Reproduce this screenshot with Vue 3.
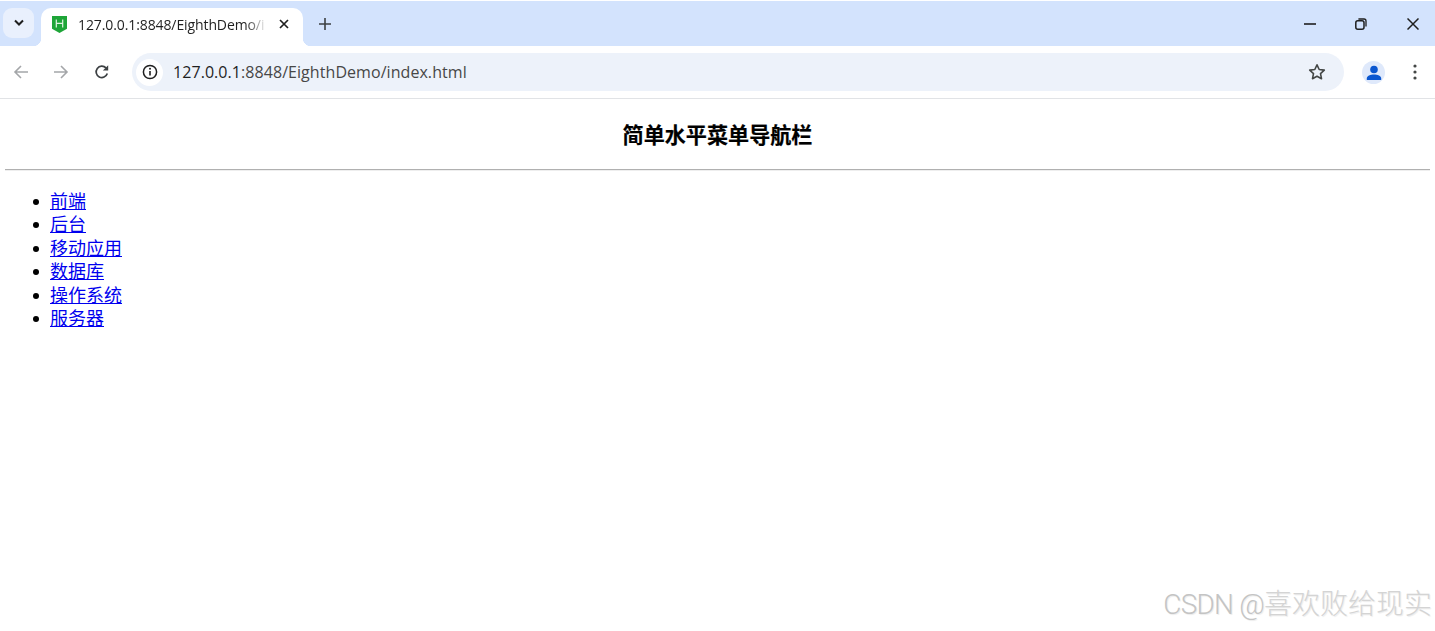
<script setup>
const items = ['前端', '后台', '移动应用', '数据库', '操作系统', '服务器']
</script>

<template>
  <div class="page">
    <header class="chrome">
      <div class="strip">
        <button class="tab-search">
          <svg width="12" height="8" viewBox="0 0 12 8"><path d="M2 1.5 6 5.5 10 1.5" fill="none" stroke="#1f1f1f" stroke-width="2"/></svg>
        </button>
        <div class="tab">
          <svg class="favicon" width="15" height="17" viewBox="0 0 15 17">
            <path d="M0 0h15v12.800L7.500 17 0 12.800z" fill="#1ea538"/>
            <path d="M4.300 3.500v8M10.700 3.500v8M4.300 7.400h6.400" fill="none" stroke="#dff3e2" stroke-width="1.200"/>
          </svg>
          <span class="tab-title">127.0.0.1:8848/EighthDemo/i</span>
          <svg class="tab-close" width="10" height="10" viewBox="0 0 10 10"><path d="M1 1 9 9M9 1 1 9" stroke="#1f1f1f" stroke-width="1.700"/></svg>
        </div>
        <svg class="new-tab" width="14" height="14" viewBox="0 0 14 14"><path d="M7 1v12M1 7h12" stroke="#3c4043" stroke-width="1.600"/></svg>
        <div class="win-controls">
          <svg width="12" height="12" viewBox="0 0 12 12"><path d="M0 6h12" stroke="#1f1f1f" stroke-width="1.600"/></svg>
          <svg width="12" height="12" viewBox="0 0 12 12"><rect x="0.800" y="2.800" width="8.200" height="8.400" rx="2" fill="none" stroke="#1f1f1f" stroke-width="1.500"/><path d="M3.400 1H9a2 2 0 0 1 2 2v5.600" fill="none" stroke="#1f1f1f" stroke-width="1.300"/></svg>
          <svg width="12" height="12" viewBox="0 0 12 12"><path d="M.5.5l11 11M11.500.5l-11 11" stroke="#1f1f1f" stroke-width="1.500"/></svg>
        </div>
      </div>
      <div class="toolbar">
        <div class="nav">
          <svg width="16" height="16" viewBox="0 0 16 16"><path d="M15 8H2M8 2 2 8l6 6" fill="none" stroke="#a4a6a9" stroke-width="1.600"/></svg>
          <svg width="16" height="16" viewBox="0 0 16 16"><path d="M1 8h13M8 2l6 6-6 6" fill="none" stroke="#a4a6a9" stroke-width="1.600"/></svg>
          <svg width="16" height="16" viewBox="0 0 16 16"><path d="M13.300 9.500A5.700 5.700 0 1 1 12 3.900" fill="none" stroke="#3c4043" stroke-width="1.700"/><path d="M14.200 1.200v5.300H8.900z" fill="#3c4043"/></svg>
        </div>
        <div class="omnibox">
          <span class="info-chip">
            <svg width="16" height="16" viewBox="0 0 16 16"><circle cx="8" cy="8" r="6.600" fill="none" stroke="#1f1f1f" stroke-width="1.500"/><path d="M8 7v4.500" stroke="#1f1f1f" stroke-width="1.600"/><circle cx="8" cy="4.800" r="1" fill="#1f1f1f"/></svg>
          </span>
          <span class="url"><span class="host">127.0.0.1</span>:8848/EighthDemo/index.html</span>
          <svg class="star" width="18" height="18" viewBox="0 0 18 18"><path d="M9 1.800l2.200 4.700 5.100.6-3.800 3.500 1 5.100L9 13.200l-4.500 2.500 1-5.100L1.700 7.100l5.100-.6z" fill="none" stroke="#444746" stroke-width="1.600" stroke-linejoin="round"/></svg>
        </div>
        <span class="avatar">
          <svg width="16" height="16" viewBox="0 0 16 16"><circle cx="8" cy="4.500" r="3.800" fill="#0b57d0"/><path d="M.8 15v-1.500C.8 11 4.500 9.600 8 9.600s7.200 1.400 7.200 3.900V15z" fill="#0b57d0"/></svg>
        </span>
        <svg class="menu" width="4" height="16" viewBox="0 0 4 16"><circle cx="2" cy="2" r="1.600" fill="#444746"/><circle cx="2" cy="8" r="1.600" fill="#444746"/><circle cx="2" cy="14" r="1.600" fill="#444746"/></svg>
      </div>
    </header>

    <main class="content">
      <h3 class="title">简单水平菜单导航栏</h3>
      <hr class="rule" />
      <ul class="list">
        <li v-for="item in items" :key="item"><a href="#">{{ item }}</a></li>
      </ul>
    </main>

    <div class="watermark"><span class="wm-latin">CSDN @</span>喜欢败给现实</div>
  </div>
</template>

<style>
html, body { margin: 0; background: #fff; overflow: hidden; }
</style>

<style scoped>
.page {
  position: relative;
  width: 1435px;
  height: 631px;
  overflow: hidden;
  background: #fff;
  font-family: "Liberation Sans", "Noto Sans CJK SC", sans-serif;
}
.chrome { display: flex; flex-direction: column; }
.strip {
  height: 45px;
  margin-top: 1px;
  background: #d3e3fd;
  display: flex;
  align-items: flex-start;
  box-sizing: border-box;
  padding: 7px 0 0 3px;
}
.tab-search {
  width: 31px;
  height: 30px;
  border: 0;
  padding: 0;
  border-radius: 9px;
  background: #e9f0fd;
  display: flex;
  align-items: center;
  justify-content: center;
}
.tab {
  position: relative;
  width: 262px;
  height: 38px;
  margin-left: 7px;
  background: #fff;
  border-radius: 10px 10px 0 0;
  display: flex;
  align-items: center;
  box-sizing: border-box;
  padding: 0 14px 6px 11px;
}
.tab::before, .tab::after {
  content: "";
  position: absolute;
  bottom: 0;
  width: 8px;
  height: 8px;
}
.tab::before { left: -8px; background: radial-gradient(circle at 0 0, #d3e3fd 8px, #fff 8.500px); }
.tab::after { right: -8px; background: radial-gradient(circle at 100% 0, #d3e3fd 8px, #fff 8.500px); }
.favicon { flex: none; }
.tab-title {
  margin-left: 11px;
  white-space: nowrap;
  font: 14px "Open Sans", sans-serif;
  letter-spacing: -0.1px;
  color: #1f1f1f;
  -webkit-mask-image: linear-gradient(90deg, #000 90%, rgba(0,0,0,0.15));
  mask-image: linear-gradient(90deg, #000 90%, rgba(0,0,0,0.15));
}
.tab-close { margin-left: auto; flex: none; }
.new-tab { margin: 9px 0 0 15px; flex: none; }
.win-controls {
  margin-left: auto;
  padding: 10px 16px 0 0;
  display: flex;
  gap: 40px;
}
.win-controls svg:first-child { transform: translateX(1px); }
.toolbar {
  height: 53px;
  box-sizing: border-box;
  border-bottom: 1px solid #e1e3e6;
  display: flex;
  align-items: flex-start;
  padding-top: 7px;
}
.nav {
  width: 132px;
  flex: none;
  height: 38px;
  display: flex;
  align-items: center;
  gap: 24px;
  box-sizing: border-box;
  padding-left: 13px;
}
.nav svg:last-child { margin-left: 1px; }
.omnibox {
  width: 1212px;
  height: 38px;
  border-radius: 19px;
  background: #edf2fa;
  display: flex;
  align-items: center;
  padding: 0 18px 0 4px;
  box-sizing: border-box;
}
.info-chip {
  width: 27px;
  height: 27px;
  border-radius: 50%;
  background: #fff;
  display: flex;
  align-items: center;
  justify-content: center;
  flex: none;
}
.url {
  margin-left: 10px;
  font: 16px "Open Sans", sans-serif;
  letter-spacing: 0.06px;
  color: #474747;
  white-space: nowrap;
}
.host { color: #1f1f1f; }
.star { margin-left: auto; }
.avatar {
  width: 23px;
  height: 23px;
  margin: 8px 0 0 18px;
  border-radius: 50%;
  background: #dfe9fb;
  display: flex;
  align-items: center;
  justify-content: center;
}
.menu { margin: 11px 0 0 28px; }
.content { padding: 0 5px; color: #000; }
.title {
  margin: 0;
  padding-top: 23px;
  height: 47px;
  box-sizing: content-box;
  font-size: 21.100px;
  line-height: 27px;
  font-weight: 700;
  text-align: center;
  -webkit-text-stroke: 0.2px #000;
}
.rule {
  margin: 0;
  height: 0;
  border: 0;
  border-top: 1px solid #b0b0b0;
  border-bottom: 1px solid #eee;
}
.list {
  margin: 20px 0 0;
  padding: 0 0 0 45px;
  list-style: none;
  font-size: 18px;
  line-height: 23.400px;
}
.list li { position: relative; }
.list li::before {
  content: "";
  position: absolute;
  left: -17px;
  top: 8px;
  width: 6px;
  height: 6px;
  border-radius: 50%;
  background: #000;
}
.list a { color: #0000ee; text-decoration: underline; }
.watermark {
  position: absolute;
  right: 3px;
  bottom: 8px;
  font-size: 28px;
  line-height: 36px;
  font-weight: 300;
  color: #d4d4d4;
  text-shadow: 1px 1px 1px #ececec;
  white-space: nowrap;
}
.wm-latin {
  font-family: Roboto, sans-serif;
  font-weight: 300;
  letter-spacing: -0.8px;
  color: #c4c4c4;
}
</style>
